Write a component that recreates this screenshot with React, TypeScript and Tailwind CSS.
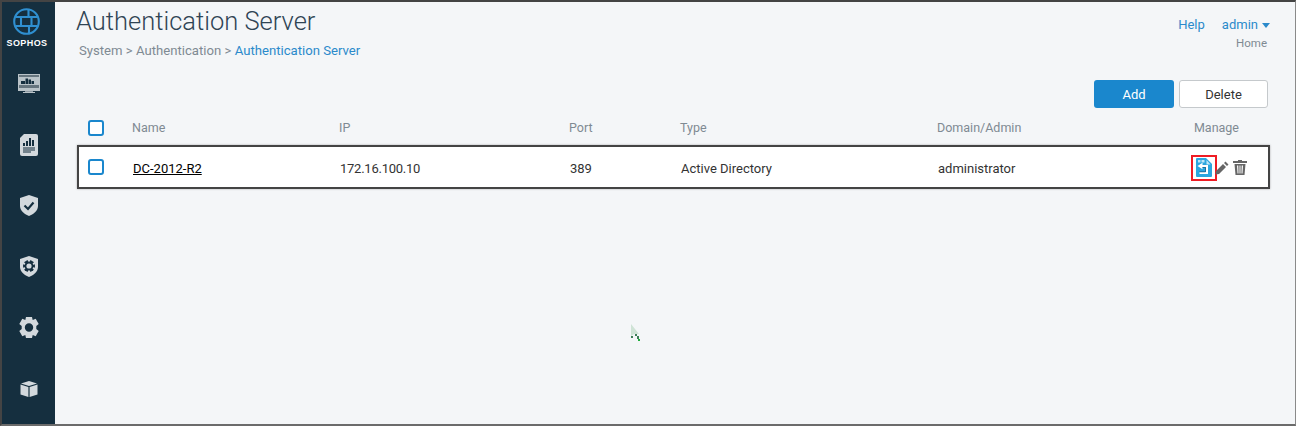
import React from 'react';

const font = { fontFamily: 'Roboto, sans-serif' };

const SophosLogo = () => (
  <svg width="27" height="27" viewBox="0 0 27 27" fill="none" stroke="#2f8fd0" strokeWidth="2.100">
    <circle cx="13.500" cy="13.500" r="12.300" />
    <path d="M3 9H24M3 18H24M15.500 1.500V9M8 9V18M18.500 9V18M16 18V25.500" />
  </svg>
);

const MonitorIcon = () => (
  <svg width="22" height="20" viewBox="0 0 22 20">
    <rect width="22" height="17" fill="#b9c3c8" />
    <rect x="1" y="1" width="20" height="2" fill="#66757e" />
    <rect x="1" y="11" width="20" height="3" fill="#66757e" />
    <path fill="#152f3f" d="M3 10H7V7H3ZM7.500 10H10V4.500H7.500ZM10.500 10H13V5.500H10.500ZM13.500 10H16V7H13.500Z" />
    <rect x="7" y="17" width="8" height="1" fill="#8d9aa3" />
    <rect x="5" y="18" width="12" height="1" fill="#b9c3c8" />
  </svg>
);

const ReportIcon = () => (
  <svg width="18" height="22" viewBox="0 0 18 22">
    <path fill="#d3d9dd" d="M4 0H16A2 2 0 0 1 18 2V20A2 2 0 0 1 16 22H2A2 2 0 0 1 0 20V4Z" />
    <path fill="#152f3f" d="M3 9H5V12H3ZM6 7H8V12H6ZM9 4H11V12H9ZM12 6H14V12H12ZM3 13.500H15V14.500H3ZM3 15.500H15V16.500H3ZM3 17.500H11V18.500H3Z" />
  </svg>
);

const ShieldCheckIcon = () => (
  <svg width="18" height="21" viewBox="0 0 18 21">
    <path fill="#d3d9dd" d="M9 0L18 3V11C18 16 13 19.500 9 21C5 19.500 0 16 0 11V3Z" />
    <path fill="none" stroke="#152f3f" strokeWidth="2.200" d="M4.500 10.500L8 14L13.500 7.500" />
  </svg>
);

const ShieldGearIcon = () => (
  <svg width="18" height="21" viewBox="0 0 18 21">
    <path fill="#d3d9dd" d="M9 0L18 3V11C18 16 13 19.500 9 21C5 19.500 0 16 0 11V3Z" />
    <circle cx="9" cy="10" r="6" fill="#152f3f" />
    <circle cx="9" cy="10" r="2.600" fill="#d3d9dd" />
    <path fill="#d3d9dd" d="M8 2.500H10V5.500H8ZM8 14.500H10V17.500H8ZM2.500 5.800L5.400 7.300L4.500 8.900L2 7.300ZM15.500 5.800L12.600 7.300L13.500 8.900L16 7.300ZM2 12.700L4.500 11.100L5.400 12.700L2.500 14.200ZM16 12.700L13.500 11.100L12.600 12.700L15.500 14.200Z" />
  </svg>
);

const GearIcon = () => (
  <svg width="20" height="21" viewBox="0 0 20 21">
    <path fill="#d3d9dd" fillRule="evenodd" d="M7 0H13L13.700 3L16.700 1.800L19.700 7L17.300 9V12L19.700 14L16.700 19.200L13.700 18L13 21H7L6.300 18L3.300 19.200L0.300 14L2.700 12V9L0.300 7L3.300 1.800L6.300 3ZM10 6.300A4.200 4.200 0 1 0 10 14.700A4.200 4.200 0 1 0 10 6.300Z" />
  </svg>
);

const BoxIcon = () => (
  <svg width="18" height="16" viewBox="0 0 18 16">
    <path fill="#d3d9dd" d="M9 0L17 2.500L9 5L1 2.500ZM0.500 3.500L8.400 6V16L0.500 13.500ZM17.500 3.500L9.600 6V16L17.500 13.500Z" />
  </svg>
);

const ImportIcon = () => (
  <svg width="16" height="19" viewBox="0 0 16 19">
    <path fill="#2ba6df" d="M1 0H10L16 6V18A1 1 0 0 1 15 19H1A1 1 0 0 1 0 18V1A1 1 0 0 1 1 0Z" />
    <path fill="#bde6f8" d="M2 2H4.500V4.500H2ZM5.500 2H8.500V4.500H5.500ZM10.500 2L14.500 6.500H10.500Z" />
    <path fill="none" stroke="#fff" strokeWidth="2" d="M6 8H11V15H3.500" />
    <path fill="#fff" d="M1.500 8L6.500 4.800V11.200Z" />
    <path fill="none" stroke="#1d5f86" strokeWidth="0.800" d="M6.500 9.500H9.500V13.800H3.500" />
  </svg>
);

const PencilIcon = () => (
  <svg width="14" height="14" viewBox="0 0 14 14">
    <path fill="#666" d="M10.500 0.500L13.500 3.500L12 5L9 2ZM8 3L11 6L4 13L0.500 13.500L1 10Z" />
  </svg>
);

const TrashIcon = () => (
  <svg width="14" height="15" viewBox="0 0 14 15">
    <path fill="#666" fillRule="evenodd" d="M5 0H9V1H14V3H0V1H5ZM1.500 4H12.500L11.500 15H2.500ZM4 5.500L4.500 13.500H5.500L5.300 5.500ZM6.500 5.500V13.500H7.500V5.500ZM8.700 5.500L8.500 13.500H9.500L10 5.500Z" />
  </svg>
);

const Checkbox = () => (
  <span className="block h-4 w-4 rounded-[3px] border-2 border-[#1a87cd] bg-white" />
);

const nav = [
  <MonitorIcon />,
  <ReportIcon />,
  <ShieldCheckIcon />,
  <ShieldGearIcon />,
  <GearIcon />,
  <BoxIcon />,
];

export default function App() {
  return (
    <div
      className="relative flex h-[426px] w-[1296px] overflow-hidden border-b-2 border-l-2 border-r border-t-2 border-b-[#6b6b6b] border-l-[#444] border-r-[#8a8a8a] border-t-[#444] bg-[#f4f6f8]"
      style={font}
    >
      <aside className="flex w-[53px] shrink-0 flex-col items-center bg-[#152f3f]">
        <div className="-ml-[3px] flex h-[51px] flex-col items-center pt-1.5">
          <SophosLogo />
          <span className="mt-[3px] text-[9px] font-bold leading-[10px] tracking-[0.4px] text-white" style={{ fontFamily: 'Liberation Sans, sans-serif' }}>SOPHOS</span>
        </div>
        <div className="flex flex-col items-center">
          {nav.map((icon, i) => (
            <div key={i} className="flex h-[61px] w-full items-center justify-center">{icon}</div>
          ))}
        </div>
      </aside>

      <main className="flex min-w-0 flex-1 flex-col pl-[21px] pr-[27px]">
        <div className="flex items-start justify-between">
          <div>
            <h1 className="text-[25.500px] font-light leading-[38px] text-[#2f4454]">Authentication Server</h1>
            <div className="ml-[3px] mt-[1px] text-[13.150px] leading-[20px] text-[#7f8a93]">
              System &gt; Authentication &gt; <span className="text-[#2b8acb]">Authentication Server</span>
            </div>
          </div>
          <div className="-mr-[2px] flex flex-col items-end pt-[14px]">
            <div className="flex items-center gap-[17px] text-[13px] leading-[18px] text-[#2b8acb]">
              <span>Help</span>
              <span className="flex items-center gap-[4px]">
                admin
                <span className="h-0 w-0 border-x-[4.500px] border-t-[5px] border-x-transparent border-t-[#2b8acb]" />
              </span>
            </div>
            <span className="mr-[3px] mt-[1px] text-[11.500px] leading-[16px] text-[#7f8a93]">Home</span>
          </div>
        </div>

        <div className="mt-[19px] flex justify-end gap-[5px]">
          <button className="h-[28px] w-[80px] rounded-[3px] bg-[#1a87cd] pt-[1px] text-[13px] text-white">Add</button>
          <button className="h-[28px] w-[89px] rounded-[3px] border border-[#c5c9cc] bg-white pt-[1px] text-[13px] text-[#333]">Delete</button>
        </div>

        <div className="mt-[7px] grid h-[22px] grid-cols-[44px_207px_230px_111px_257px_1fr] items-center pl-[12px] text-[12.500px] text-[#7f8a93]">
          <span className="mt-[3px]"><Checkbox /></span>
          <span className="pt-[4px]">Name</span>
          <span className="pt-[4px]">IP</span>
          <span className="pt-[4px]">Port</span>
          <span className="pt-[4px]">Type</span>
          <span className="flex justify-end pr-[29px] pt-[4px]">
            <span className="mr-auto">Domain/Admin</span>
            <span>Manage</span>
          </span>
        </div>

        <div className="-mr-[2px] ml-[1px] mt-[8px] grid h-[44px] grid-cols-[45px_207px_230px_111px_257px_1fr] items-center border-2 border-[#444] bg-white pl-[9px] text-[13px] text-[#333] shadow-[0_0_2px_rgba(0,0,0,0.3)]">
          <Checkbox />
          <a className="pt-[4px] text-black underline">DC-2012-R2</a>
          <span className="pt-[4px] tracking-[-0.25px]">172.16.100.10</span>
          <span className="pt-[4px]">389</span>
          <span className="pt-[4px]">Active Directory</span>
          <span className="flex items-center justify-between">
            <span className="pt-[4px]">administrator</span>
            <span className="mr-[21px] mt-[1px] flex items-center">
              <span className="flex h-[26px] w-[26px] items-center justify-center border-2 border-[#ef1c24]">
                <ImportIcon />
              </span>
              <span className="-ml-[2px] mr-[4px]"><PencilIcon /></span>
              <TrashIcon />
            </span>
          </span>
        </div>
      </main>

      {/* mouse pointer left in the capture */}
      <svg className="absolute left-[628px] top-[321px]" width="12" height="20" viewBox="0 0 12 20">
        <path fill="#cfe3d6" d="M1 1V13L4 11L6 11L9 11Z" />
        <path fill="#3f7f5a" d="M1 13H3V15H1ZM5 11H7V13H5ZM7 13H9V16H7Z" />
        <rect x="8" y="16" width="2" height="2" fill="#1fae3c" />
      </svg>
    </div>
  );
}
